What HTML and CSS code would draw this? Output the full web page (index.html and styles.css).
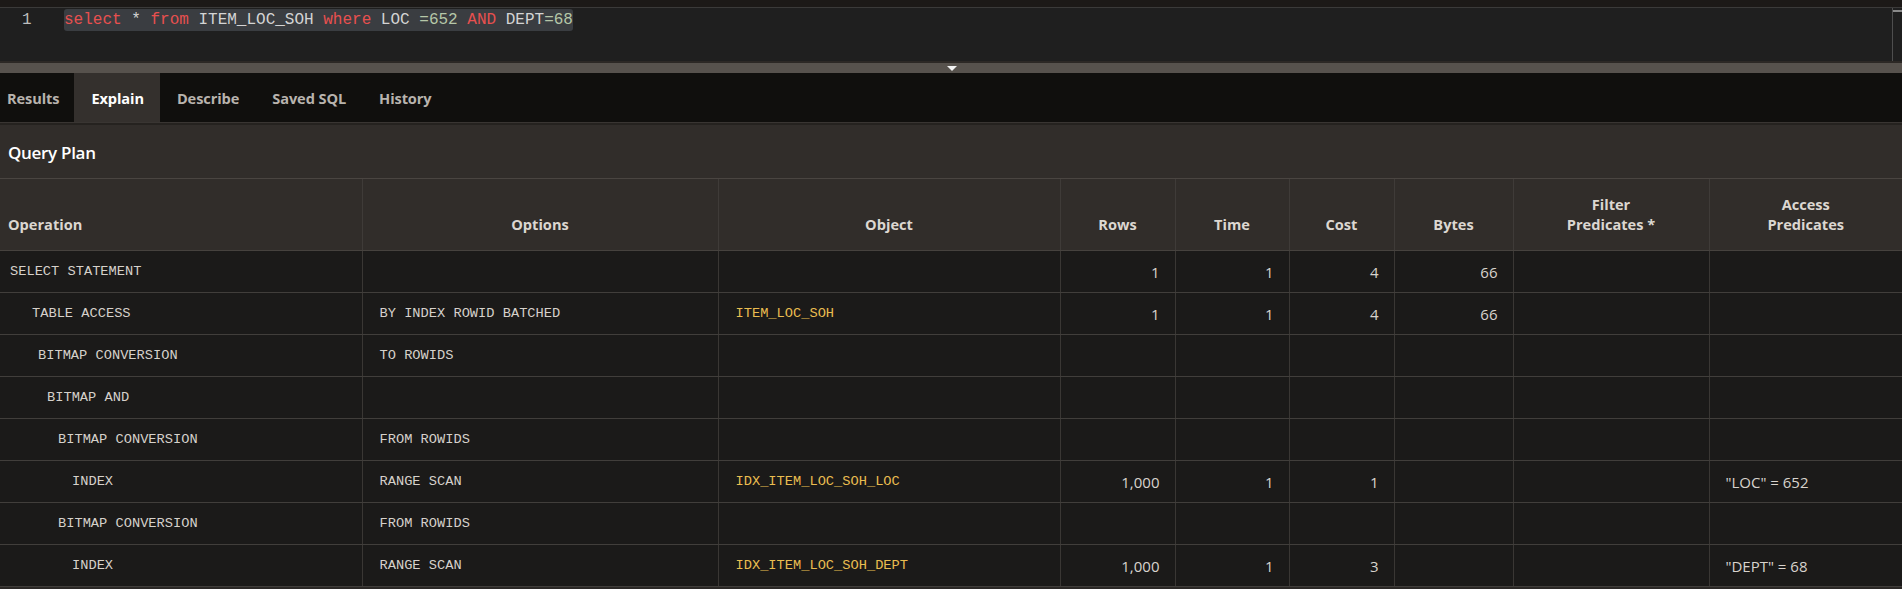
FILE: index.html
```html
<!DOCTYPE html>
<html>
<head>
<meta charset="utf-8">
<title>SQL Worksheet - Explain</title>
<link rel="stylesheet" href="styles.css">
</head>
<body>
<div class="topstrip"></div>
<div class="editor">
  <div class="gutter">1</div>
  <div class="code"><span class="hl"><span class="kw">select</span> * <span class="kw">from</span> ITEM_LOC_SOH <span class="kw">where</span> LOC <span class="num">=652</span> <span class="kw">AND</span> DEPT<span class="num">=68</span></span></div>
  <div class="vscroll"><div class="thumb"></div></div>
</div>
<div class="splitter"><span class="tri"></span></div>
<div class="tabs">
  <div class="tab">Results</div>
  <div class="tab active">Explain</div>
  <div class="tab">Describe</div>
  <div class="tab">Saved SQL</div>
  <div class="tab">History</div>
</div>
<div class="qp">Query Plan</div>
<div class="gridwrap">
<table class="plan">
  <colgroup>
    <col class="c-op"><col class="c-opt"><col class="c-obj"><col class="c-rows"><col class="c-time"><col class="c-cost"><col class="c-bytes"><col class="c-filter"><col class="c-access">
  </colgroup>
  <thead>
    <tr>
      <th class="left">Operation</th>
      <th>Options</th>
      <th>Object</th>
      <th>Rows</th>
      <th>Time</th>
      <th>Cost</th>
      <th>Bytes</th>
      <th>Filter<br>Predicates *</th>
      <th>Access<br>Predicates</th>
    </tr>
  </thead>
  <tbody>
    <tr>
      <td class="op d0">SELECT STATEMENT</td><td class="mono"></td><td class="obj"></td>
      <td class="n">1</td><td class="n">1</td><td class="n">4</td><td class="n">66</td><td></td><td class="pred"></td>
    </tr>
    <tr>
      <td class="op d1">TABLE ACCESS</td><td class="mono">BY INDEX ROWID BATCHED</td><td class="obj">ITEM_LOC_SOH</td>
      <td class="n">1</td><td class="n">1</td><td class="n">4</td><td class="n">66</td><td></td><td class="pred"></td>
    </tr>
    <tr>
      <td class="op d2">BITMAP CONVERSION</td><td class="mono">TO ROWIDS</td><td class="obj"></td>
      <td class="n"></td><td class="n"></td><td class="n"></td><td class="n"></td><td></td><td class="pred"></td>
    </tr>
    <tr>
      <td class="op d3">BITMAP AND</td><td class="mono"></td><td class="obj"></td>
      <td class="n"></td><td class="n"></td><td class="n"></td><td class="n"></td><td></td><td class="pred"></td>
    </tr>
    <tr>
      <td class="op d4">BITMAP CONVERSION</td><td class="mono">FROM ROWIDS</td><td class="obj"></td>
      <td class="n"></td><td class="n"></td><td class="n"></td><td class="n"></td><td></td><td class="pred"></td>
    </tr>
    <tr>
      <td class="op d5">INDEX</td><td class="mono">RANGE SCAN</td><td class="obj">IDX_ITEM_LOC_SOH_LOC</td>
      <td class="n">1,000</td><td class="n">1</td><td class="n">1</td><td class="n"></td><td></td><td class="pred">"LOC" = 652</td>
    </tr>
    <tr>
      <td class="op d4">BITMAP CONVERSION</td><td class="mono">FROM ROWIDS</td><td class="obj"></td>
      <td class="n"></td><td class="n"></td><td class="n"></td><td class="n"></td><td></td><td class="pred"></td>
    </tr>
    <tr>
      <td class="op d5">INDEX</td><td class="mono">RANGE SCAN</td><td class="obj">IDX_ITEM_LOC_SOH_DEPT</td>
      <td class="n">1,000</td><td class="n">1</td><td class="n">3</td><td class="n"></td><td></td><td class="pred">"DEPT" = 68</td>
    </tr>
  </tbody>
</table>
</div>
</body>
</html>
```
FILE: styles.css
```css
html, body {
  margin: 0;
  padding: 0;
}
body {
  width: 1902px;
  height: 589px;
  overflow: hidden;
  background: #2b2826;
  font-family: "Open Sans", "Noto Sans", sans-serif;
}
.topstrip {
  height: 7px;
  background: #1c1917;
  border-bottom: 1px solid #3b3a39;
}
.editor {
  height: 53px;
  background: #1f1f1f;
  display: flex;
  border-bottom: 2px solid #2c2825;
}
.gutter {
  width: 42px;
  padding-left: 22px;
  color: #bdbdbd;
  font-family: "Liberation Mono", monospace;
  font-size: 16px;
  line-height: 24px;
}
.code {
  flex: 1;
  font-family: "Liberation Mono", monospace;
  font-size: 16px;
  line-height: 24px;
  color: #d4d4d4;
  white-space: pre;
}
.hl {
  background: #3a3d41;
  border-radius: 3px;
  padding: 2px 0;
}
.kw { color: #e8504f; }
.num { color: #b5c7a8; }
.vscroll {
  width: 9px;
  border-left: 1px solid #4e4e4e;
}
.thumb {
  height: 2px;
  background: #8a8a8a;
  margin-top: 2px;
}
.splitter {
  height: 10px;
  background: #57524d;
  display: flex;
  justify-content: center;
  align-items: center;
}
.tri {
  width: 0;
  height: 0;
  border-left: 5px solid transparent;
  border-right: 5px solid transparent;
  border-top: 5px solid #f2f2f2;
  margin-left: 2px;
}
.tabs {
  height: 49px;
  background: #100f0d;
  display: flex;
  border-bottom: 1px solid #393532;
}
.tab {
  padding: 1px 16px 0 17px;
  line-height: 48px;
  font-size: 14.6px;
  font-weight: 700;
  color: #b8b3ad;
  letter-spacing: -0.1px;
}
.tab:first-child { padding-left: 7px; padding-right: 15px; }
.tab.active {
  background: #34302d;
  color: #ffffff;
}
.qp {
  height: 50px;
  padding-top: 3px;
  border-top: 2px solid #25221f;
  background: #312d2a;
  border-bottom: 1px solid #4a4541;
  color: #ffffff;
  font-size: 17px;
  font-weight: 600;
  line-height: 50px;
  padding-left: 8px;
  letter-spacing: -0.3px;
}
.gridwrap {
  height: 409px;
  background: #2b2826;
}
.plan {
  width: 1902px;
  border-collapse: collapse;
  table-layout: fixed;
}
.c-op { width: 362px; }
.c-opt { width: 356px; }
.c-obj { width: 342px; }
.c-rows { width: 115px; }
.c-time { width: 114px; }
.c-cost { width: 105px; }
.c-bytes { width: 119px; }
.c-filter { width: 196px; }
.c-access { width: 193px; }
.plan th {
  background: #312d2a;
  color: #dcd7d1;
  font-size: 14.6px;
  font-weight: 700;
  line-height: 20px;
  height: 55px;
  padding: 0 6px 16px;
  vertical-align: bottom;
  text-align: center;
  border-left: 1px solid #3f3b38;
  border-bottom: 1px solid #46423e;
}
.plan th.left {
  text-align: left;
  padding-left: 8px;
}
.plan th:first-child, .plan td:first-child { border-left: none; }
.plan td {
  background: #1b1a19;
  height: 41px;
  padding: 0;
  border-left: 1px solid #3a3734;
  border-bottom: 1px solid #413e3b;
  color: #d6d1cb;
  white-space: nowrap;
  overflow: hidden;
}
.op, .mono, .obj {
  font-family: "Liberation Mono", monospace;
  font-size: 13.7px;
}
.mono { padding-left: 17px !important; }
.obj { padding-left: 17px !important; color: #eabd50 !important; }
.d0 { padding-left: 10px !important; }
.d1 { padding-left: 32px !important; }
.d2 { padding-left: 38px !important; }
.d3 { padding-left: 47px !important; }
.d4 { padding-left: 58px !important; }
.d5 { padding-left: 72px !important; }
.n {
  text-align: right;
  padding-right: 15px !important;
  font-size: 15px;
  color: #d8d3cd !important;
}
.pred {
  padding-left: 16px !important;
  font-size: 15px;
  color: #d8d3cd !important;
}
```
